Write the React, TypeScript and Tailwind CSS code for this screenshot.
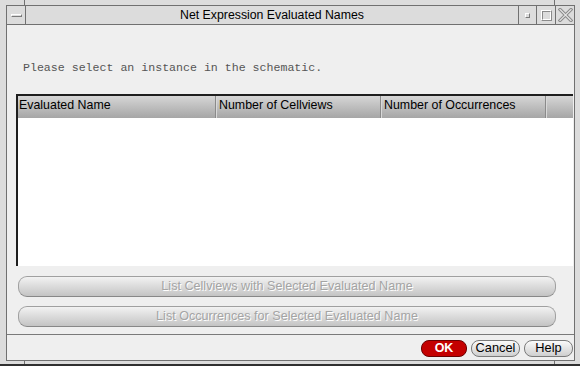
import React from "react";

const sans = { fontFamily: '"Liberation Sans", Arial, sans-serif' };

function CloseX() {
  return (
    <svg width="15" height="14" viewBox="0 0 15 14">
      <path d="M2 1.5 L13 12.5 M13 1.5 L2 12.5" stroke="#8a8a8a" strokeWidth="3.2" strokeLinecap="square" />
      <path d="M2 1.5 L13 12.5 M13 1.5 L2 12.5" stroke="#e4e4e4" strokeWidth="1.2" strokeLinecap="square" />
    </svg>
  );
}

export default function App() {
  return (
    <div className="w-[580px] h-[366px] bg-[#dcdcdc] flex flex-col overflow-hidden" style={sans}>
      {/* top frame strip */}
      <div className="h-[5px] flex shrink-0">
        <div className="w-[25px] border-r border-[#707070]" />
        <div className="flex-1" />
        <div className="w-[26px] border-l border-[#707070]" />
      </div>
      <div className="flex-1 flex pl-[6px] pr-[5px]">
        <div className="flex-1 flex flex-col border border-[#707070]">
          {/* title bar */}
          <div className="h-[19px] flex border-b border-[#707070] bg-[#dcdcdc] shrink-0">
            <div className="w-[19px] border-r border-[#707070] flex items-center justify-center">
              <div className="w-[11px] h-[3px] bg-[#dcdcdc] border-t border-l border-white border-b border-r border-b-[#7a7a7a] border-r-[#7a7a7a] mt-[1px]" />
            </div>
            <div className="flex-1 flex items-center justify-center text-[12.3px] text-black leading-none pt-[1px]">
              Net Expression Evaluated Names
            </div>
            <div className="w-[18px] border-l border-[#707070] flex items-center justify-center">
              <div className="w-[5px] h-[5px] bg-[#dcdcdc] border border-t-white border-l-white border-b-[#7a7a7a] border-r-[#7a7a7a] mt-[1px]" />
            </div>
            <div className="w-[19px] border-l border-[#707070] flex items-center justify-center">
              <div className="w-[11px] h-[11px] border border-t-white border-l-white border-b-[#8a8a8a] border-r-[#8a8a8a] flex">
                <div className="flex-1 border border-t-[#8a8a8a] border-l-[#8a8a8a] border-b-white border-r-white" />
              </div>
            </div>
            <div className="w-[19px] border-l border-[#707070] flex items-center justify-center">
              <CloseX />
            </div>
          </div>
          {/* content */}
          <div className="flex-1 bg-[#efefef] flex flex-col">
            <div
              className="h-[69px] pl-[16px] pt-[37px] shrink-0 text-[11.6px] leading-[12px] text-[#555555]"
              style={{ fontFamily: '"Liberation Mono", "Courier New", monospace' }}
            >
              Please select an instance in the schematic.
            </div>
            {/* table */}
            <div className="ml-[9px] mr-[1px] h-[172px] flex flex-col border-t-2 border-l-2 border-[#1e1e1e] bg-white shrink-0">
              <div className="h-[22px] flex bg-gradient-to-b from-[#d6d6d6] to-[#a6a6a6] text-[12.4px] text-black leading-none shrink-0">
                <div className="w-[198px] flex items-center pl-[1px] pb-[3px] border-r border-[#8a8a8a]">Evaluated Name</div>
                <div className="w-[165px] flex items-center pl-[2px] pb-[3px] border-r border-[#8a8a8a] border-l border-l-[#d8d8d8]">Number of Cellviews</div>
                <div className="w-[165px] flex items-center pl-[2px] pb-[3px] border-r border-[#8a8a8a] border-l border-l-[#d8d8d8]">Number of Occurrences</div>
                <div className="flex-1 border-l border-l-[#d8d8d8]" />
              </div>
              <div className="flex-1 bg-white" />
            </div>
            {/* action buttons */}
            <div className="flex flex-col gap-[9px] pl-[11px] pr-[18px] pt-[10px]">
              {["List Cellviews with Selected Evaluated Name", "List Occurrences for Selected Evaluated Name"].map((t) => (
                <div
                  key={t}
                  className="h-[21px] rounded-[9px] border border-[#a0a0a0] border-b-[#888888] bg-gradient-to-b from-[#f2f2f2] to-[#c4c4c4] flex items-center justify-center text-[12.6px] leading-none text-[#a4a4a4]"
                  style={{ textShadow: "1px 1px 0 #ffffff" }}
                >
                  {t}
                </div>
              ))}
            </div>
            <div className="mt-[7px] border-t border-[#7a7a7a]" />
            {/* bottom row */}
            <div className="flex justify-end gap-[4px] pr-[1px] pt-[5px]">
              <div className="w-[46px] h-[17px] rounded-[8px] bg-[#c40000] border border-[#6a0000] flex items-center justify-center text-white font-bold text-[12.5px] leading-none">
                OK
              </div>
              <div className="w-[49px] h-[17px] rounded-[8px] border border-[#7a7a7a] bg-gradient-to-b from-[#fafafa] to-[#cfcfcf] flex items-center justify-center text-[12.8px] leading-none text-black">
                Cancel
              </div>
              <div className="w-[49px] h-[17px] rounded-[8px] border border-[#7a7a7a] bg-gradient-to-b from-[#fafafa] to-[#cfcfcf] flex items-center justify-center text-[12.8px] leading-none text-black">
                Help
              </div>
            </div>
          </div>
        </div>
      </div>
      {/* bottom frame strip */}
      <div className="h-[5px] flex shrink-0 border-b-2 border-[#303030]">
        <div className="w-[25px] border-r border-[#707070]" />
        <div className="flex-1" />
        <div className="w-[26px] border-l border-[#707070]" />
      </div>
    </div>
  );
}
